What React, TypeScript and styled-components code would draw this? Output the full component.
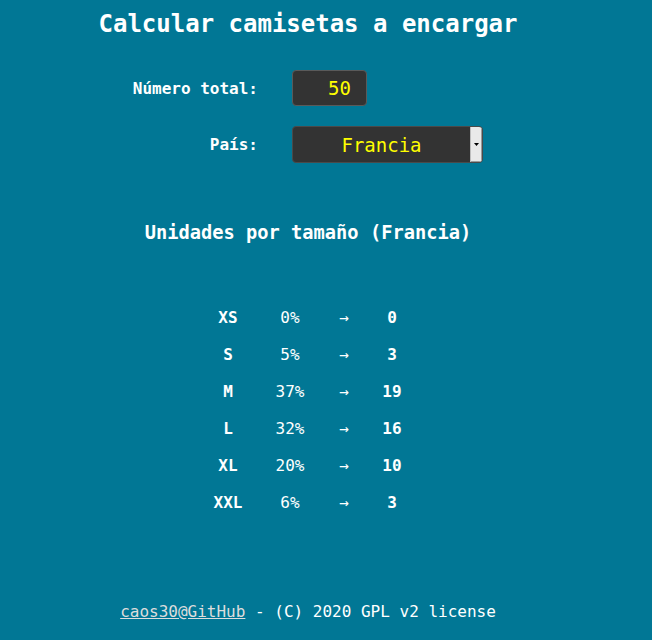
import React from "react";
import styled, { createGlobalStyle } from "styled-components";

const Global = createGlobalStyle`
  html, body { margin: 0; padding: 0; background: #017795; }
  body { font-family: "DejaVu Sans Mono", monospace; color: #ffffff; }
`;

const Page = styled.div`
  width: 600px;
  margin-left: 8px;
  min-height: 640px;
  display: flex;
  flex-direction: column;
  align-items: center;
`;

const Title = styled.h1`
  margin: 10px 0 0;
  font-size: 24px;
  line-height: 28px;
  font-weight: bold;
`;

const Form = styled.div`
  margin-top: 32px;
  align-self: stretch;
  display: grid;
  grid-template-columns: 250px auto;
  column-gap: 34px;
  row-gap: 20px;
  align-items: center;
`;

const Label = styled.label`
  text-align: right;
  font-size: 16px;
  font-weight: bold;
`;

const NumberBox = styled.div`
  box-sizing: border-box;
  width: 75px;
  height: 36px;
  background: #333333;
  border: 1px solid #5a5a5a;
  border-radius: 4px;
  color: #ffff00;
  font-size: 19px;
  display: flex;
  align-items: center;
  justify-content: flex-end;
  padding-right: 15px;
`;

const SelectBox = styled.div`
  box-sizing: border-box;
  width: 191px;
  height: 37px;
  background: #333333;
  border: 1px solid #4a4a4a;
  border-radius: 4px;
  color: #ffff00;
  font-size: 19px;
  display: flex;
  align-items: stretch;
  overflow: hidden;
`;

const SelectValue = styled.div`
  flex: 1;
  display: flex;
  align-items: center;
  justify-content: center;
`;

const ArrowButton = styled.div`
  width: 11px;
  background: #e9e9e9;
  border-left: 1px solid #bdbdbd;
  box-shadow: inset -1px -1px 0 #9a9a9a;
  display: flex;
  align-items: center;
  justify-content: center;
`;

const Heading = styled.h3`
  margin: 58px 0 0;
  font-size: 18.7px;
  line-height: 24px;
  font-weight: bold;
`;

const Table = styled.div`
  margin-top: 54px;
  display: grid;
  grid-template-columns: 60px 64px 44px 52px;
  grid-auto-rows: 37px;
  align-items: center;
  justify-items: center;
  font-size: 16px;
`;

const Cell = styled.div<{ $bold?: boolean }>`
  font-weight: ${(p) => (p.$bold ? "bold" : "normal")};
`;

const Footer = styled.div`
  margin-top: 81px;
  font-size: 16px;
  line-height: 20px;
`;

const Link = styled.a`
  color: #dddddd;
  text-decoration: underline;
`;

const rows = [
  ["XS", "0%", "0"],
  ["S", "5%", "3"],
  ["M", "37%", "19"],
  ["L", "32%", "16"],
  ["XL", "20%", "10"],
  ["XXL", "6%", "3"],
];

export default function App() {
  return (
    <>
      <Global />
      <Page>
        <Title>Calcular camisetas a encargar</Title>
        <Form>
          <Label>Número total:</Label>
          <NumberBox>50</NumberBox>
          <Label>País:</Label>
          <SelectBox>
            <SelectValue>Francia</SelectValue>
            <ArrowButton>
              <svg width="5" height="3" viewBox="0 0 5 3">
                <path d="M0 0H5L2.5 3Z" fill="#000" />
              </svg>
            </ArrowButton>
          </SelectBox>
        </Form>
        <Heading>Unidades por tamaño (Francia)</Heading>
        <Table>
          {rows.map(([s, p, n]) => (
            <React.Fragment key={s}>
              <Cell $bold>{s}</Cell>
              <Cell>{p}</Cell>
              <Cell>→</Cell>
              <Cell $bold>{n}</Cell>
            </React.Fragment>
          ))}
        </Table>
        <Footer>
          <Link href="#">caos30@GitHub</Link> - (C) 2020 GPL v2 license
        </Footer>
      </Page>
    </>
  );
}
